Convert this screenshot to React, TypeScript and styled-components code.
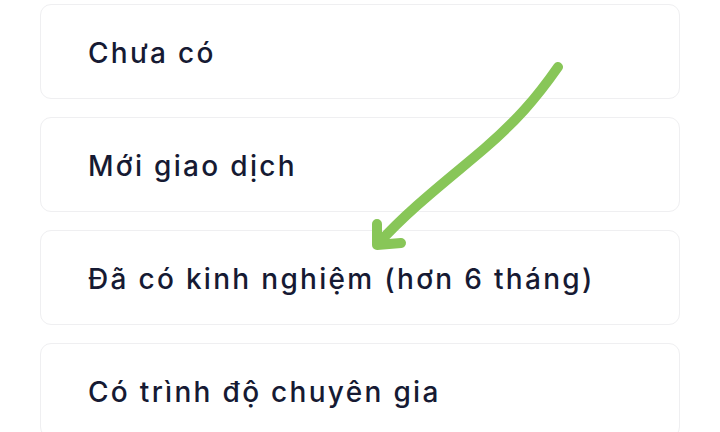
import React, { FunctionComponent } from 'react';
import styled, { createGlobalStyle } from 'styled-components';

const GlobalStyle = createGlobalStyle`
	html, body {
		margin: 0;
		padding: 0;
		background: #ffffff;
		overflow: hidden;
	}
`;

const Page = styled.div`
	position: relative;
	width: 720px;
	height: 432px;
	overflow: hidden;
	background: #ffffff;
`;

const List = styled.div`
	display: flex;
	flex-direction: column;
	gap: 18px;
	padding: 4px 40px 0 40px;
`;

const Option = styled.div`
	height: 95px;
	box-sizing: border-box;
	border: 1.5px solid #efeff1;
	border-radius: 11px;
	display: flex;
	align-items: center;
	padding: 2px 0 0 47px;
	font-family: Inter, 'Noto Sans', sans-serif;
	font-weight: 500;
	font-size: 28px;
	color: #161a33;
	letter-spacing: 2.3px;
`;

const Arrow = styled.svg`
	position: absolute;
	left: 0;
	top: 0;
	pointer-events: none;
`;

const options = [
	'Chưa có',
	'Mới giao dịch',
	'Đã có kinh nghiệm (hơn 6 tháng)',
	'Có trình độ chuyên gia',
];

const App: FunctionComponent = () => (
	<Page>
		<GlobalStyle />
		<List>
			{options.map((text) => (
				<Option key={text}>{text}</Option>
			))}
		</List>
		<Arrow width="720" height="432" viewBox="0 0 720 432">
			<g
				fill="none"
				stroke="#88c658"
				strokeWidth="10"
				strokeLinecap="round"
				strokeLinejoin="round"
			>
				<path d="M558 67 C 535 100, 515 122, 485 148 S 410 208, 378 244" />
				<path d="M377 224 L 377 245 L 401 243" />
			</g>
		</Arrow>
	</Page>
);

export default App;
